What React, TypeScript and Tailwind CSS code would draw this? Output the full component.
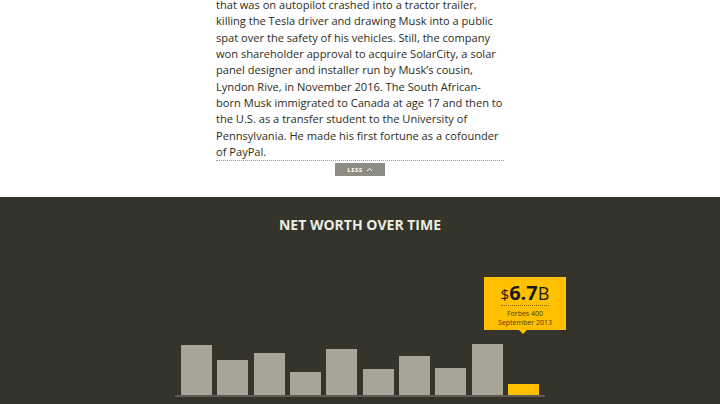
import React from "react";

const lines = [
  "that was on autopilot crashed into a tractor trailer,",
  "killing the Tesla driver and drawing Musk into a public",
  "spat over the safety of his vehicles. Still, the company",
  "won shareholder approval to acquire SolarCity, a solar",
  "panel designer and installer run by Musk\u2019s cousin,",
  "Lyndon Rive, in November 2016. The South African-",
  "born Musk immigrated to Canada at age 17 and then to",
  "the U.S. as a transfer student to the University of",
  "Pennsylvania. He made his first fortune as a cofounder",
  "of PayPal.",
];

const bars = [50, 35, 42, 23, 46, 26, 39, 27, 51, 11];

export default function App() {
  return (
    <div
      className="w-[720px] h-[404px] overflow-hidden flex flex-col bg-white"
      style={{ fontFamily: '"Open Sans", "Noto Sans", sans-serif' }}
    >
      <div className="h-[197px] flex flex-col items-center overflow-hidden">
        <div className="w-[288px] -mt-[3px] border-b border-dotted border-[#9a9a90] text-[11.1px] leading-[16.33px] text-[#2c2c20]">
          {lines.map((l, i) => (
            <div key={i} className="whitespace-nowrap">
              {l}
            </div>
          ))}
        </div>
        <div className="mt-[2px] w-[50px] h-[13px] bg-[#8c8c84] flex items-center justify-center gap-[3px] text-white">
          <span className="text-[6px] font-bold tracking-[0.5px] leading-none">LESS</span>
          <svg width="7" height="5" viewBox="0 0 7 5" fill="none">
            <path d="M1 4 L3.5 1.5 L6 4" stroke="white" strokeWidth="1" />
          </svg>
        </div>
      </div>
      <div className="flex-1 bg-[#34342a] flex flex-col items-center">
        <div className="pt-[18px] text-[14px] leading-[20px] font-bold text-[#ecece4]">
          NET WORTH OVER TIME
        </div>
        <div className="mt-auto mb-[7px] relative w-[370px]">
          <div className="flex items-end gap-[5.44px] px-[6px]">
            {bars.map((h, i) => (
              <div
                key={i}
                className={i === 9 ? "w-[31px] bg-[#ffc000]" : "w-[31px] bg-[#a6a598]"}
                style={{ height: h }}
              />
            ))}
          </div>
          <div className="h-[2px] bg-[#5c5c55]" />
          <div className="absolute left-[309px] bottom-[67px] w-[82px] h-[53px] bg-[#ffc000] flex flex-col items-center pt-[6px]">
            <div className="flex items-baseline text-[#1a1a12] leading-[20px] border-b border-dotted border-[#8a6a00] pb-[1px]">
              <span className="text-[15px]">$</span>
              <span className="text-[20px] font-bold">6.7</span>
              <span className="text-[18px]">B</span>
            </div>
            <div className="mt-[3px] text-[7px] leading-[9px] text-[#4a3c00]">Forbes 400</div>
            <div className="text-[7px] leading-[9px] text-[#4a3c00]">September 2013</div>
            <div className="absolute left-[35px] -bottom-[4px] w-0 h-0 border-l-[4px] border-r-[4px] border-t-[4px] border-l-transparent border-r-transparent border-t-[#ffc000]" />
          </div>
        </div>
      </div>
    </div>
  );
}
